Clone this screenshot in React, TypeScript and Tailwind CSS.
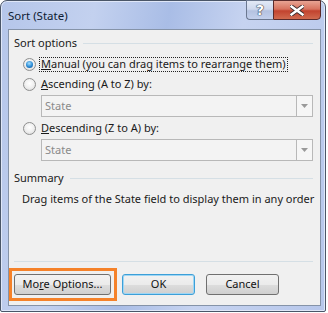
import React from "react";

const font = { fontFamily: '"Noto Sans", "Open Sans", sans-serif' };

function Radio({ checked }: { checked?: boolean }) {
  return (
    <div className="w-[13px] h-[13px] rounded-full border border-[#8e8f8f] bg-[radial-gradient(circle_at_50%_40%,#ffffff_0%,#f0f0f0_50%,#d4d4d4_100%)] flex items-center justify-center shrink-0">
      {checked && (
        <div className="w-[7px] h-[7px] rounded-full bg-[radial-gradient(circle_at_45%_35%,#a6e0ff_0%,#2a8ad4_55%,#0d4a8c_100%)]" />
      )}
    </div>
  );
}

function Select() {
  return (
    <div className="ml-[32px] mr-[7px] h-[22px] border border-[#b8b8b8] bg-[#f3f3f3] flex items-stretch">
      <div className="flex-1 pl-[3px] text-[11px] leading-[20px] text-[#8a8a8a]">State</div>
      <div className="w-[16px] border-l border-[#b8b8b8] bg-[#f6f6f6] flex items-center justify-center">
        <svg width="7" height="4" viewBox="0 0 7 4">
          <path d="M0 0h7L3.5 4z" fill="#9a9a9a" />
        </svg>
      </div>
    </div>
  );
}

function Btn({ children, w, focus }: { children: React.ReactNode; w: string; focus?: boolean }) {
  return (
    <div
      className={`${w} h-[21px] rounded-[3px] border ${
        focus ? "border-[#3c9fd8] shadow-[inset_0_0_0_1px_#9fd6f4]" : "border-[#707070]"
      } bg-[linear-gradient(#f2f2f2_0%,#ebebeb_50%,#dddddd_51%,#cfcfcf_100%)] flex items-center justify-center text-[11px] text-[#111]`}
    >
      {children}
    </div>
  );
}

export default function App() {
  return (
    <div className="w-[328px] h-[313px] bg-white relative" style={font}>
      <div className="w-[326px] h-[312px] rounded-t-[7px] rounded-b-[2px] border border-[#4a5668] bg-[linear-gradient(100deg,#b5c6ea_0%,#c3d1ef_25%,#a9bde6_45%,#c6d3f0_65%,#b7c7eb_100%)] flex flex-col shadow-[inset_0_0_0_1px_#dfe7f8]">
        <div className="h-[28px] flex items-start justify-between pl-[7px] pr-[4px]">
          <div className="text-[11.5px] leading-[14px] mt-[8px] text-[#0f1c33]">Sort (State)</div>
          <div className="flex -mt-[1px]">
            <div className="w-[27px] h-[20px] border border-[#6b7890] border-r-0 rounded-bl-[4px] bg-[linear-gradient(#e2e9f6_0%,#cfd9ee_45%,#b4c2e0_55%,#c3d0ec_100%)] flex items-center justify-center">
              <span
                className="text-white font-bold text-[14px] leading-[14px]"
                style={{ textShadow: "0 0 1px #2c3446, 0 0 1px #2c3446, 0 0 1px #2c3446", fontFamily: '"DejaVu Sans", sans-serif' }}
              >
                ?
              </span>
            </div>
            <div className="w-[48px] h-[20px] border border-[#5a2a2a] rounded-br-[4px] bg-[linear-gradient(#e8a493_0%,#d7735f_45%,#c2432f_55%,#d06a4f_100%)] flex items-center justify-center">
              <svg width="14" height="11" viewBox="0 0 14 11">
                <path
                  d="M1.5 1.5 L12.5 9.5 M12.5 1.5 L1.5 9.5"
                  stroke="#3b2a2a"
                  strokeWidth="4.2"
                  strokeLinecap="square"
                />
                <path
                  d="M1.5 1.5 L12.5 9.5 M12.5 1.5 L1.5 9.5"
                  stroke="#ffffff"
                  strokeWidth="2.4"
                  strokeLinecap="square"
                />
              </svg>
            </div>
          </div>
        </div>
        <div className="ml-[7px] mr-[4px] h-[277px] border border-[#8593a8] bg-[#f0f0f0] flex flex-col text-[11px] text-[#1a1a1a]">
          <div className="mt-[5px] h-[16px] flex items-center pl-[5px] pr-[7px]">
            <span className="leading-[16px]">Sort options</span>
            <div className="flex-1 ml-[6px] border-t border-[#d5dfe5]" />
          </div>
          <div className="mt-[5px] h-[16px] flex items-center pl-[14px]">
            <Radio checked />
            <div className="ml-[3px] px-[1px] h-[15px] flex items-center border border-dotted border-[#222]">
              <span className="leading-[14px]">
                <u>M</u>anual (you can drag items to rearrange them)
              </span>
            </div>
          </div>
          <div className="mt-[4px] h-[16px] flex items-center pl-[14px]">
            <Radio />
            <span className="ml-[5px] leading-[16px]">
              <u>A</u>scending (A to Z) by:
            </span>
          </div>
          <div className="mt-[3px]">
            <Select />
          </div>
          <div className="mt-[3px] h-[16px] flex items-center pl-[14px]">
            <Radio />
            <span className="ml-[5px] leading-[16px]">
              <u>D</u>escending (Z to A) by:
            </span>
          </div>
          <div className="mt-[3px]">
            <Select />
          </div>
          <div className="mt-[9px] h-[16px] flex items-center pl-[5px] pr-[7px]">
            <span className="leading-[16px]">Summary</span>
            <div className="flex-1 ml-[6px] border-t border-[#d5dfe5]" />
          </div>
          <div className="mt-[5px] h-[16px] pl-[13px] leading-[16px] whitespace-nowrap">
            Drag items of the State field to display them in any order
          </div>
          <div className="flex-1" />
          <div className="ml-[5px] mr-[7px] border-t border-[#d5dfe5]" />
          <div className="mt-[6px] mb-[4px] flex items-center">
            <div className="border-[3px] border-[#f5822a] p-[3px] pl-[2px] pr-[3px]">
              <Btn w="w-[97px]">
                <span>
                  Mo<u>r</u>e Options...
                </span>
              </Btn>
            </div>
            <div className="ml-[5px]">
              <Btn w="w-[73px]" focus>
                OK
              </Btn>
            </div>
            <div className="ml-[11px]">
              <Btn w="w-[73px]">Cancel</Btn>
            </div>
          </div>
        </div>
      </div>
    </div>
  );
}
